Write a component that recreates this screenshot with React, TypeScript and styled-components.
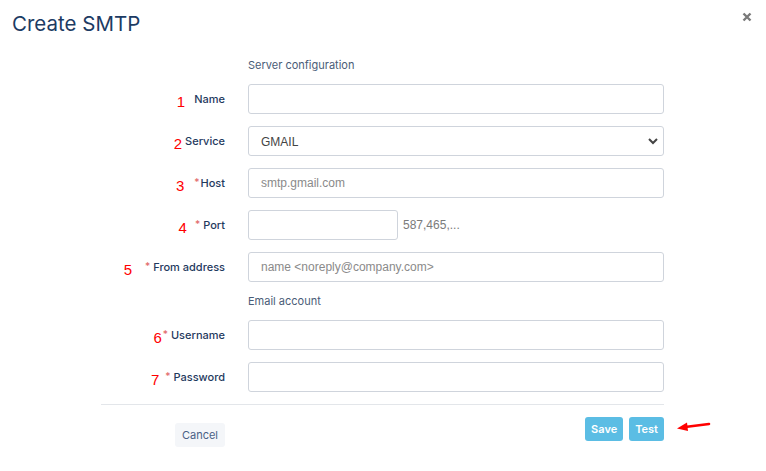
import React from "react";
import styled, { createGlobalStyle } from "styled-components";

const GlobalStyle = createGlobalStyle`
    body {
        margin: 0;
        background: #fff;
        font-family: Inter, "Liberation Sans", Arial, sans-serif;
    }
    * { box-sizing: border-box; }
`;

const Modal = styled.div`
    width: 766px;
    height: 471px;
    background: #fff;
`;

const Header = styled.div`
    display: flex;
    justify-content: space-between;
    align-items: flex-start;
    height: 58px;
    padding: 11px 14px 0 12px;
`;

const Title = styled.h1`
    margin: 0;
    font-family: Inter, "Open Sans", sans-serif;
    font-size: 20.5px;
    font-weight: 400;
    line-height: 26px;
    color: #1c3b63;
`;

const Close = styled.button`
    border: 0;
    background: none;
    padding: 0;
    margin-top: 1px;
    color: #777;
    cursor: pointer;
    display: flex;
`;

const Form = styled.div`
    display: grid;
    grid-template-columns: 147px 416px;
    row-gap: 12px;
    margin-left: 101px;
`;

const Section = styled.div`
    grid-column: 2;
    font-size: 11px;
    line-height: 14px;
    color: #4a5c77;
`;

const Label = styled.label`
    display: flex;
    justify-content: flex-end;
    align-items: center;
    padding-right: 23px;
    font-size: 11px;
    font-weight: 500;
    color: #1f3a5e;
`;

const Num = styled.span<{ $gap: number }>`
    font-family: "Liberation Sans", Arial, sans-serif;
    font-size: 15px;
    color: #f00;
    margin-right: ${p => p.$gap}px;
    margin-top: 4px;
`;

const Star = styled.span<{ $gap?: number }>`
    color: #e26a6a;
    font-size: 10px;
    margin-right: ${p => p.$gap ?? 3}px;
    margin-top: -2px;
`;

const Field = styled.div`
    display: flex;
    align-items: center;
    gap: 5px;
`;

const Input = styled.input<{ $w?: number }>`
    width: ${p => (p.$w ? `${p.$w}px` : "100%")};
    height: 30px;
    border: 1px solid #cfd4dc;
    border-radius: 3px;
    padding: 0 12px;
    font-family: "Liberation Sans", Arial, sans-serif;
    font-size: 12px;
    color: #444;
    outline: none;
    &::placeholder { color: #8a8a8a; }
`;

const SelectWrap = styled.div`
    position: relative;
    width: 100%;
    svg {
        position: absolute;
        right: 5px;
        top: 9px;
        pointer-events: none;
    }
`;

const Select = styled.select`
    appearance: none;
    width: 100%;
    height: 30px;
    border: 1px solid #cfd4dc;
    border-radius: 3px;
    padding: 2px 12px 0;
    background: #fff;
    font-family: "Liberation Sans", Arial, sans-serif;
    font-size: 12px;
    color: #444;
    outline: none;
`;

const Hint = styled.span`
    font-family: "Liberation Sans", Arial, sans-serif;
    font-size: 12px;
    color: #7b7b7b;
`;

const Divider = styled.div`
    grid-column: 1 / -1;
    border-top: 1px solid #e3e6ea;
`;

const FooterLeft = styled.div`
    display: flex;
    justify-content: flex-end;
    padding-right: 23px;
    padding-top: 6px;
`;

const FooterRight = styled.div`
    position: relative;
    display: flex;
    justify-content: flex-end;
    gap: 6px;
`;

const Button = styled.button<{ $primary?: boolean }>`
    height: 24px;
    padding: 0 ${p => (p.$primary ? 6 : 7)}px;
    border: 0;
    border-radius: 3px;
    font-family: Inter, "Liberation Sans", sans-serif;
    font-size: 11px;
    font-weight: ${p => (p.$primary ? 600 : 400)};
    background: ${p => (p.$primary ? "#5bbde4" : "#f4f6f9")};
    color: ${p => (p.$primary ? "#fff" : "#4a6185")};
    cursor: pointer;
`;

const Arrow = styled.svg`
    position: absolute;
    left: 425px;
    top: 2px;
`;

const ChevronIcon = () => (
    <svg width="12" height="12" viewBox="0 0 12 12">
        <path d="M2 4 L6 8 L10 4" fill="none" stroke="#444" strokeWidth="2" />
    </svg>
);

const App: React.FC = () => {
    return (
        <Modal>
            <GlobalStyle />
            <Header>
                <Title>Create SMTP</Title>
                <Close aria-label="close">
                    <svg width="10" height="10" viewBox="0 0 10 10">
                        <path d="M1.5 1.5 L8.5 8.5 M8.5 1.5 L1.5 8.5" stroke="#7a7a7a" strokeWidth="2.4" />
                    </svg>
                </Close>
            </Header>
            <Form>
                <Section>Server configuration</Section>

                <Label><Num $gap={9}>1</Num>Name</Label>
                <Field><Input /></Field>

                <Label><Num $gap={3}>2</Num>Service</Label>
                <Field>
                    <SelectWrap>
                        <Select defaultValue="GMAIL">
                            <option>GMAIL</option>
                        </Select>
                        <ChevronIcon />
                    </SelectWrap>
                </Field>

                <Label><Num $gap={10}>3</Num><Star $gap={1}>*</Star>Host</Label>
                <Field><Input placeholder="smtp.gmail.com" /></Field>

                <Label><Num $gap={8}>4</Num><Star>*</Star>Port</Label>
                <Field><Input $w={150} /><Hint>587,465,...</Hint></Field>

                <Label><Num $gap={13}>5</Num><Star>*</Star>From address</Label>
                <Field><Input placeholder="name <noreply@company.com>" /></Field>

                <Section>Email account</Section>

                <Label><Num $gap={1}>6</Num><Star>*</Star>Username</Label>
                <Field><Input /></Field>

                <Label><Num $gap={6}>7</Num><Star>*</Star>Password</Label>
                <Field><Input type="password" /></Field>

                <Divider />

                <FooterLeft><Button>Cancel</Button></FooterLeft>
                <FooterRight>
                    <Button $primary>Save</Button>
                    <Button $primary>Test</Button>
                    <Arrow width="40" height="14" viewBox="0 0 40 14">
                        <path d="M36 5 L12 8" stroke="#f00" strokeWidth="2.6" strokeLinecap="round" />
                        <path d="M4 9.5 L14 3.5 L15 12 Z" fill="#f00" />
                    </Arrow>
                </FooterRight>
            </Form>
        </Modal>
    );
};

export default App;
